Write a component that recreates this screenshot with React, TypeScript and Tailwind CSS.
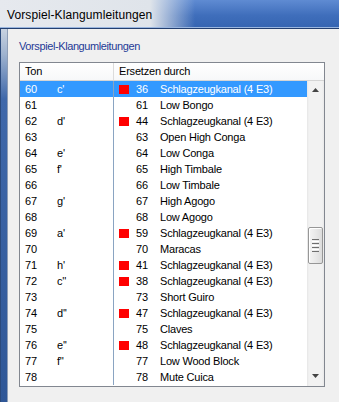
import React from "react";

type Row = [number, string, boolean, number, string];

const rows: Row[] = [
  [60, "c'", true, 36, "Schlagzeugkanal (4 E3)"],
  [61, "", false, 61, "Low Bongo"],
  [62, "d'", true, 44, "Schlagzeugkanal (4 E3)"],
  [63, "", false, 63, "Open High Conga"],
  [64, "e'", false, 64, "Low Conga"],
  [65, "f'", false, 65, "High Timbale"],
  [66, "", false, 66, "Low Timbale"],
  [67, "g'", false, 67, "High Agogo"],
  [68, "", false, 68, "Low Agogo"],
  [69, "a'", true, 59, "Schlagzeugkanal (4 E3)"],
  [70, "", false, 70, "Maracas"],
  [71, "h'", true, 41, "Schlagzeugkanal (4 E3)"],
  [72, "c''", true, 38, "Schlagzeugkanal (4 E3)"],
  [73, "", false, 73, "Short Guiro"],
  [74, "d''", true, 47, "Schlagzeugkanal (4 E3)"],
  [75, "", false, 75, "Claves"],
  [76, "e''", true, 48, "Schlagzeugkanal (4 E3)"],
  [77, "f''", false, 77, "Low Wood Block"],
  [78, "", false, 78, "Mute Cuica"],
];

function Arrow({ up }: { up: boolean }) {
  return (
    <svg width="7" height="4" viewBox="0 0 7 4">
      {up ? (
        <polygon points="3.5,0 7,4 0,4" fill="#444" />
      ) : (
        <polygon points="0,0 7,0 3.5,4" fill="#444" />
      )}
    </svg>
  );
}

export default function App() {
  return (
    <div className="w-[339px] h-[402px] overflow-hidden flex flex-col font-['Liberation_Sans',Arial,sans-serif] bg-[#f0f0f0]">
      {/* Title bar */}
      <div className="h-[29px] shrink-0 flex items-center pl-[7px] pt-[1px] border-b border-[#233f70] shadow-[inset_0_-1px_0_#9ab6df] bg-[linear-gradient(to_right,#e6e9ee_0px,#dfe4ea_150px,rgba(223,228,234,0)_195px),linear-gradient(to_bottom,#5f8bd2,#3f6ebb_55%,#3564b1)]">
        <span className="text-[12px] leading-[16px] tracking-[0.1px] text-black">Vorspiel-Klangumleitungen</span>
      </div>

      <div className="flex-1 flex min-h-0">
        {/* Left window frame */}
        <div className="w-[8px] shrink-0 border-l border-[#2b4a7c] border-r border-r-[#8d9db6] bg-[linear-gradient(to_bottom,#c9d3e1_0px,#9fb3cf_25px,#3f68aa_70px,#2f5797_100%)]" />

        {/* Content */}
        <div className="flex-1 bg-[#f0f0f0] pl-[11px] pt-[9px]">
          <div className="text-[11px] leading-[16px] tracking-[-0.4px] text-[#1f3a96]">
            Vorspiel-Klangumleitungen
          </div>

          <div className="mt-[8px] w-[306px] h-[325px] border border-[#828790] bg-white flex flex-col text-[11px] tracking-[-0.2px] text-black">
            {/* Header */}
            <div className="h-[18px] shrink-0 flex border-b border-[#d5d5d5] bg-[linear-gradient(to_bottom,#ffffff,#f7f8f9)]">
              <div className="w-[94px] shrink-0 border-r border-[#dcdcdc] pl-[5px] flex items-center">Ton</div>
              <div className="flex-1 pl-[5px] flex items-center">Ersetzen durch</div>
            </div>

            <div className="flex-1 flex min-h-0">
              {/* Rows */}
              <div className="flex-1 flex flex-col">
                {rows.map(([n, note, red, m, name], i) => {
                  const sel = i === 0;
                  return (
                    <div
                      key={n}
                      className={
                        "h-[16px] flex leading-[16px] " +
                        (sel ? "bg-[#3399ff] text-white" : "")
                      }
                    >
                      <div className="w-[94px] shrink-0 border-r border-[#8aa4c2] pl-[5px] flex">
                        <span className="w-[32px] shrink-0">{n}</span>
                        <span>{note}</span>
                      </div>
                      <div className="flex-1 flex items-center pl-[5px]">
                        {red ? (
                          <span className="w-[10px] h-[9px] bg-[#ff0000] shrink-0" />
                        ) : (
                          <span className="w-[10px] h-[9px] shrink-0" />
                        )}
                        <span className="w-[24px] shrink-0 ml-[7px]">{m}</span>
                        <span className="whitespace-nowrap">{name}</span>
                      </div>
                    </div>
                  );
                })}
              </div>

              {/* Scrollbar */}
              <div className="w-[17px] shrink-0 flex flex-col bg-[linear-gradient(to_right,#e6e6e6,#f2f2f2_2px,#f2f2f2_15px,#e9e9e9)]">
                <div className="h-[17px] flex items-center justify-center pt-[1px]">
                  <Arrow up />
                </div>
                <div className="flex-1 relative">
                  <div className="mt-[129px] mx-[1px] h-[37px] rounded-[2px] border border-[#979797] bg-[linear-gradient(to_right,#f4f4f4,#e9e9e9_50%,#dcdcdc)] shadow-[inset_1px_1px_0_#ffffff] flex flex-col items-center justify-center gap-[1px]">
                    <div className="w-[7px] h-[1px] bg-[#6f6f6f]" />
                    <div className="w-[7px] h-[1px] bg-[#ffffff]" />
                    <div className="w-[7px] h-[1px] bg-[#6f6f6f]" />
                    <div className="w-[7px] h-[1px] bg-[#ffffff]" />
                    <div className="w-[7px] h-[1px] bg-[#6f6f6f]" />
                    <div className="w-[7px] h-[1px] bg-[#ffffff]" />
                    <div className="w-[7px] h-[1px] bg-[#6f6f6f]" />
                  </div>
                </div>
                <div className="h-[17px] flex items-center justify-center pb-[3px]">
                  <Arrow up={false} />
                </div>
              </div>
            </div>
          </div>
        </div>
      </div>
    </div>
  );
}
